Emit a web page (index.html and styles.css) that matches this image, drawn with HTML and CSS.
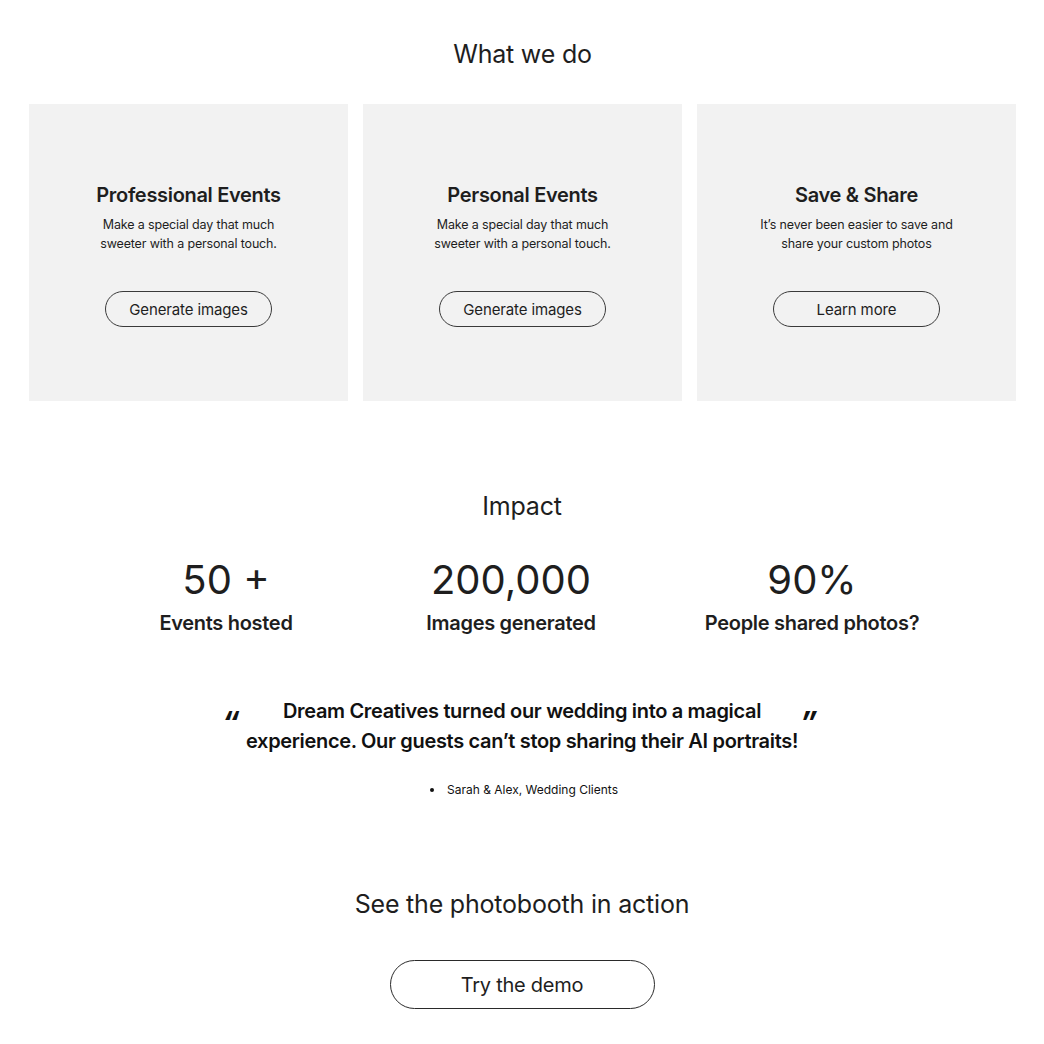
FILE: index.html
```html
<!DOCTYPE html>
<html lang="en">
<head>
<meta charset="utf-8">
<title>Dream Creatives</title>
<link rel="stylesheet" href="styles.css">
</head>
<body>
<main class="page">
  <section class="what">
    <h2 class="section-title">What we do</h2>
    <div class="cards">
      <div class="card">
        <h3 class="card-title">Professional Events</h3>
        <p class="card-desc">Make a special day that much sweeter with a personal touch.</p>
        <a class="pill-btn" href="#">Generate images</a>
      </div>
      <div class="card">
        <h3 class="card-title">Personal Events</h3>
        <p class="card-desc">Make a special day that much sweeter with a personal touch.</p>
        <a class="pill-btn" href="#">Generate images</a>
      </div>
      <div class="card">
        <h3 class="card-title">Save &amp; Share</h3>
        <p class="card-desc">It’s never been easier to save and share your custom photos</p>
        <a class="pill-btn" href="#">Learn more</a>
      </div>
    </div>
  </section>

  <section class="impact">
    <h2 class="section-title">Impact</h2>
    <div class="stats">
      <div class="stat">
        <div class="stat-num">50 +</div>
        <div class="stat-label">Events hosted</div>
      </div>
      <div class="stat">
        <div class="stat-num">200,000</div>
        <div class="stat-label">Images generated</div>
      </div>
      <div class="stat">
        <div class="stat-num">90%</div>
        <div class="stat-label">People shared photos?</div>
      </div>
    </div>

    <figure class="testimonial">
      <blockquote class="quote">
        <span class="qmark qmark-open">“</span>
        <p class="quote-text">Dream Creatives turned our wedding into a magical experience. Our guests can’t stop sharing their AI portraits!</p>
        <span class="qmark qmark-close">”</span>
      </blockquote>
      <ul class="attribution">
        <li>Sarah &amp; Alex, Wedding Clients</li>
      </ul>
    </figure>
  </section>

  <section class="demo">
    <h2 class="section-title">See the photobooth in action</h2>
    <a class="demo-btn" href="#">Try the demo</a>
  </section>
</main>
</body>
</html>
```

FILE: styles.css
```css
* {
  box-sizing: border-box;
}

html, body {
  margin: 0;
  padding: 0;
  background: #ffffff;
}

body {
  font-family: Inter, "Noto Sans", "Liberation Sans", sans-serif;
  color: #1e1e1e;
}

.page {
  display: flex;
  flex-direction: column;
}

.section-title {
  margin: 0;
  font-size: 25px;
  line-height: 32px;
  font-weight: 400;
  letter-spacing: -0.2px;
  text-align: center;
  color: #1e1e1e;
}

/* What we do */
.what {
  padding: 38px 28px 0 29px;
  display: flex;
  flex-direction: column;
  gap: 34px;
}

.cards {
  display: grid;
  grid-template-columns: repeat(3, 1fr);
  gap: 15px;
}

.card {
  height: 297px;
  background: #f2f2f2;
  display: flex;
  flex-direction: column;
  align-items: center;
  justify-content: center;
  text-align: center;
  padding-top: 5px;
}

.card-title {
  margin: 0;
  font-size: 20px;
  line-height: 24px;
  font-weight: 600;
  letter-spacing: -0.32px;
  color: #1e1e1e;
}

.card-desc {
  margin: 8px 0 0;
  width: 205px;
  font-size: 12.5px;
  line-height: 19px;
  letter-spacing: -0.15px;
  color: #1e1e1e;
}

.pill-btn {
  margin-top: 38px;
  width: 167px;
  height: 36px;
  border: 1px solid #3a3a3a;
  border-radius: 18px;
  display: flex;
  align-items: center;
  justify-content: center;
  font-size: 15px;
  letter-spacing: -0.12px;
  color: #1e1e1e;
  text-decoration: none;
}

/* Impact */
.impact {
  padding-top: 89px;
  display: flex;
  flex-direction: column;
  align-items: stretch;
}

.stats {
  margin-top: 34px;
  padding-left: 10px;
  display: grid;
  grid-template-columns: 260px 310px 292px;
  justify-content: center;
}

.stat {
  display: flex;
  flex-direction: column;
  align-items: center;
  gap: 7px;
}

.stat-num {
  font-size: 40px;
  line-height: 48px;
  font-weight: 400;
}

.stat-label {
  font-size: 20px;
  line-height: 24px;
  font-weight: 600;
  letter-spacing: -0.3px;
}

.testimonial {
  margin: 61px 0 0;
  display: flex;
  flex-direction: column;
  align-items: center;
}

.quote {
  margin: 0;
  padding-right: 8px;
  display: flex;
  align-items: flex-start;
  justify-content: center;
}

.qmark {
  font-size: 30px;
  line-height: 30px;
  font-weight: 700;
  font-style: italic;
  padding-top: 11px;
  width: 14px;
  color: #111;
}

.qmark-open {
  margin-right: 8px;
}

.quote-text {
  margin: 0;
  width: 556px;
  font-size: 20px;
  line-height: 30px;
  font-weight: 600;
  letter-spacing: -0.33px;
  text-align: center;
  color: #111;
}

.attribution {
  margin: 25px 0 0;
  padding: 0 0 0 4px;
  list-style: disc inside;
  font-size: 12px;
  line-height: 18px;
  color: #111;
}

/* Demo */
.demo {
  padding-top: 89px;
  display: flex;
  flex-direction: column;
  align-items: center;
  gap: 40px;
}

.demo-btn {
  width: 265px;
  height: 49px;
  border: 1px solid #2a2a2a;
  border-radius: 25px;
  display: flex;
  align-items: center;
  justify-content: center;
  font-size: 20px;
  letter-spacing: -0.25px;
  color: #1e1e1e;
  text-decoration: none;
}
```
